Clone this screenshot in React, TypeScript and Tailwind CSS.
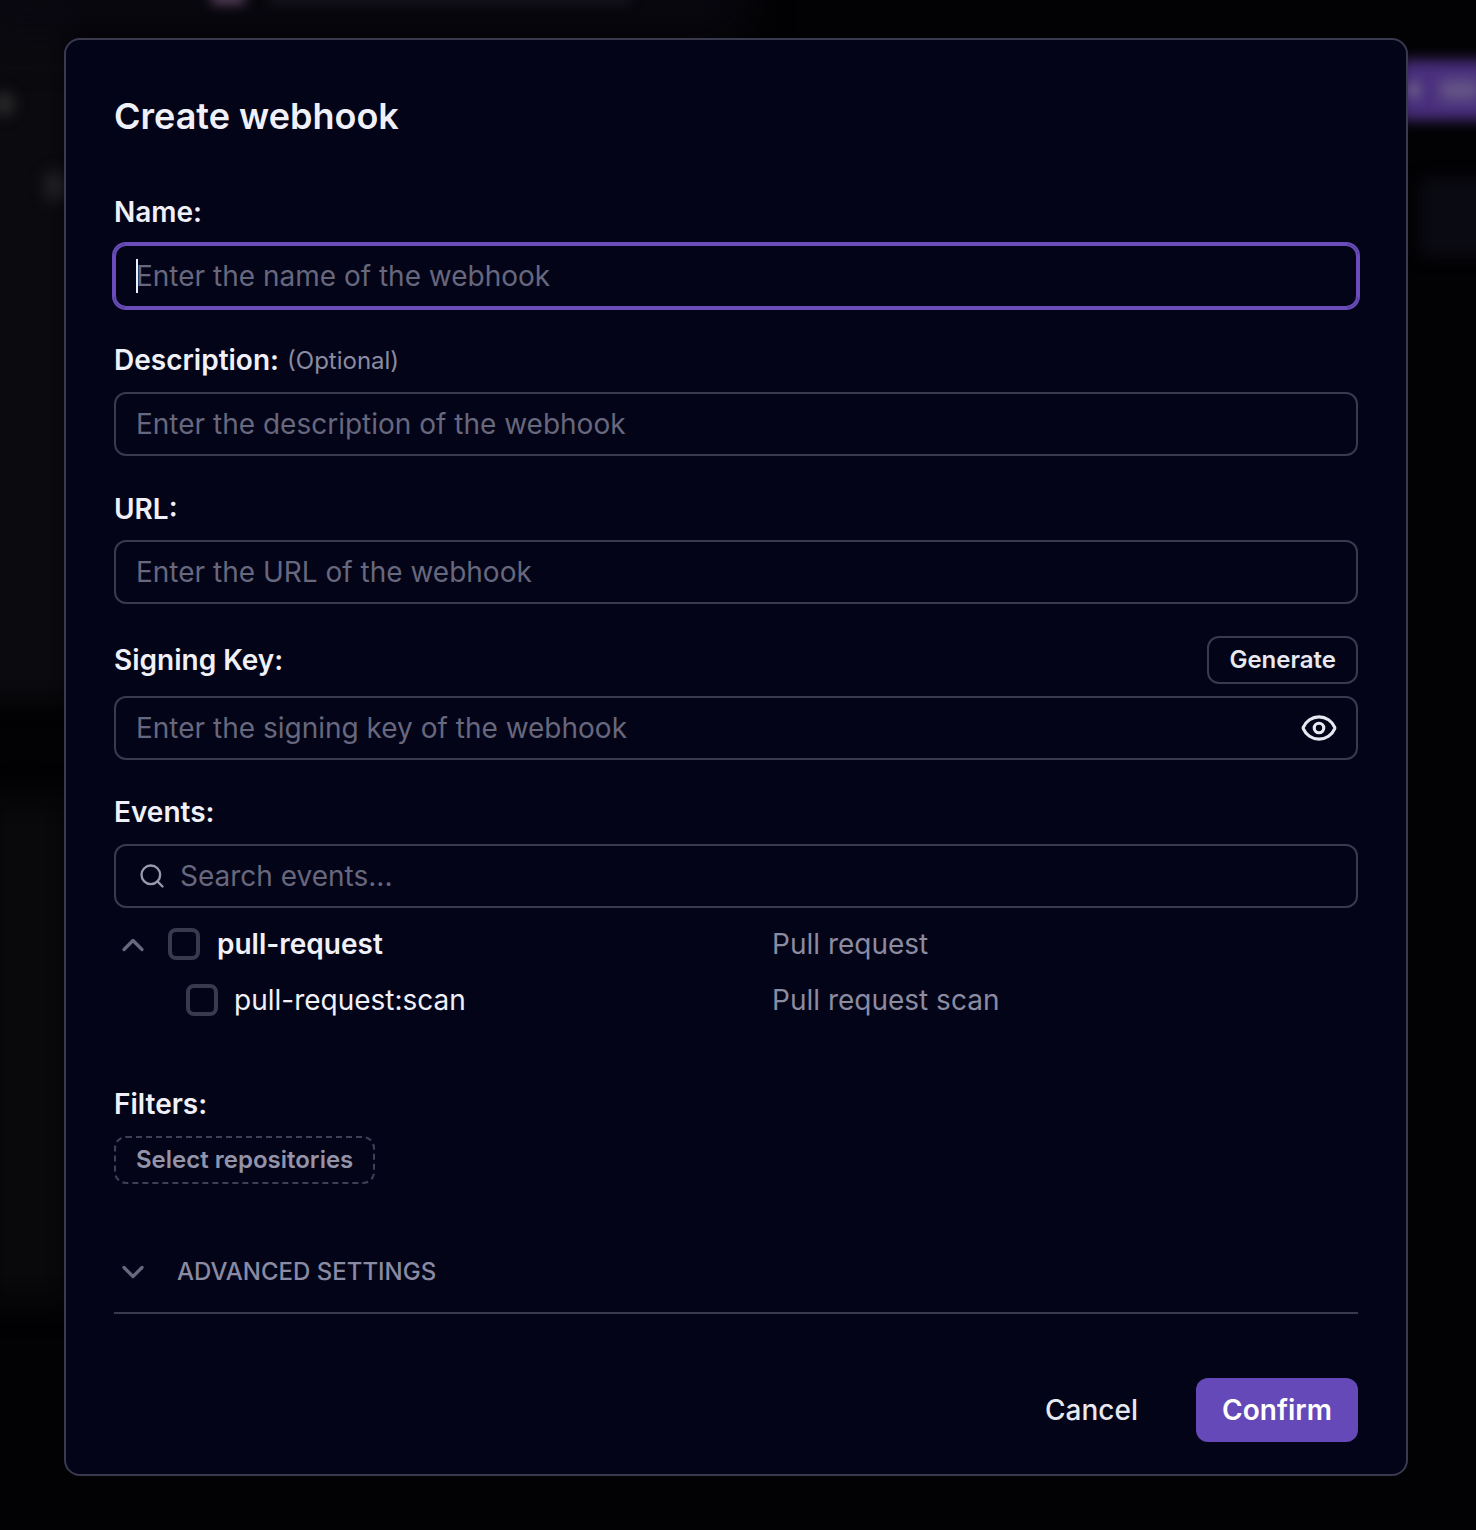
import { ChevronDown, ChevronUp, Eye, Search } from 'lucide-react';

const inputClass =
  'h-16 w-full rounded-xl border-2 border-[#3a3a4f] bg-transparent px-5 text-[28px] text-[#f0f0f8] outline-none placeholder:text-[#67677d]';

function Label({ children, className = '' }: { children: React.ReactNode; className?: string }) {
  return <label className={`block text-[28px] leading-8 font-semibold text-[#f0f0f8] ${className}`}>{children}</label>;
}

function Checkbox() {
  return <span className="block size-8 shrink-0 rounded-lg border-4 border-[#3a3a4f]" />;
}

function Backdrop() {
  return (
    <div className="pointer-events-none absolute inset-0 overflow-hidden" aria-hidden>
      <div className="absolute left-[-40px] top-[-40px] h-[740px] w-[110px] bg-[#0b0a0e] blur-md" />
      <div className="absolute left-[-20px] top-[-40px] h-[76px] w-[760px] bg-[#0a0810] blur-xl" />
      <div className="absolute left-[-20px] top-[800px] h-[500px] w-[90px] bg-[#09090b] blur-lg" />
      <div className="absolute left-[210px] top-[-8px] h-3 w-9 rounded-full bg-[#5a4560] blur-[6px]" />
      <div className="absolute left-[270px] top-[-6px] h-2 w-[360px] bg-[#1c1a22] blur-[6px]" />
      <div className="absolute left-[-6px] top-[92px] h-6 w-5 rounded-full bg-[#2a2a2c] blur-[7px]" />
      <div className="absolute left-[44px] top-[170px] h-8 w-5 rounded-full bg-[#201f23] blur-[7px]" />
      <div className="absolute left-[1400px] top-[60px] h-[60px] w-[90px] bg-[#4a2f7e] blur-[7px]" />
      <div className="absolute left-[1408px] top-[82px] h-4 w-3 bg-[#6e6088] blur-[6px]" />
      <div className="absolute left-[1440px] top-[80px] h-5 w-10 bg-[#655685] blur-[7px]" />
      <div className="absolute left-[1420px] top-[178px] h-[78px] w-[70px] bg-[#0a0a12] blur-[8px]" />
    </div>
  );
}

export default function App() {
  return (
    <div className="relative h-[1530px] w-[1476px] overflow-hidden bg-[#020204] pl-16 pt-[38px] font-['Inter',sans-serif]">
      <Backdrop />
      <div className="relative h-[1438px] w-[1344px] rounded-2xl border-2 border-[#3a3a4f] bg-[#030418] px-12 pt-[56px]">
        <h2 className="text-[36px] leading-10 font-semibold text-[#f0f0f8]">Create webhook</h2>

        <Label className="mt-[60px]">Name:</Label>
        <div className="relative mt-4">
          <input
            className="h-16 w-full rounded-xl border-2 border-[#6a4cba] bg-transparent px-5 text-[28px] text-[#f0f0f8] shadow-[0_0_0_2px_#6a4cba] outline-none placeholder:text-[#67677d]"
            placeholder="Enter the name of the webhook"
          />
          <span className="absolute left-[22px] top-[15px] h-[34px] w-0.5 bg-[#f0f0f8]" />
        </div>

        <Label className="mt-9">
          Description: <span className="ml-px align-[1px] text-[24px] font-normal text-[#8b8ba1]">(Optional)</span>
        </Label>
        <input className={`${inputClass} mt-[15px]`} placeholder="Enter the description of the webhook" />

        <Label className="mt-[37px]">URL:</Label>
        <input className={`${inputClass} mt-[15px]`} placeholder="Enter the URL of the webhook" />

        <div className="mt-8 flex items-center justify-between">
          <Label>Signing Key:</Label>
          <button className="h-12 rounded-xl border-2 border-[#3a3a4f] px-5 text-[24px] font-semibold text-[#e8e8f0]">
            Generate
          </button>
        </div>
        <div className="relative mt-3">
          <input className={inputClass} placeholder="Enter the signing key of the webhook" />
          <Eye size={38} strokeWidth={2} className="absolute right-5 top-[13px] text-[#e8e8f0]" />
        </div>

        <Label className="mt-9">Events:</Label>
        <div className="mt-4 flex h-16 items-center gap-[14px] rounded-xl border-2 border-[#3a3a4f] px-[22px]">
          <Search size={28} strokeWidth={2} className="shrink-0 text-[#9a9aae]" />
          <input
            className="w-full bg-transparent text-[28px] text-[#f0f0f8] outline-none placeholder:text-[#67677d]"
            placeholder="Search events..."
          />
        </div>

        <div className="mt-5 flex h-8 items-center">
          <div className="flex w-[658px] items-center">
            <span className="flex w-[38px] shrink-0 translate-y-px justify-center">
              <ChevronUp size={36} strokeWidth={2.2} className="shrink-0 text-[#67677d]" />
            </span>
            <span className="ml-4">
              <Checkbox />
            </span>
            <span className="ml-[17px] text-[28px] font-semibold text-[#f0f0f8]">pull-request</span>
          </div>
          <span className="text-[28px] text-[#8b8ba1]">Pull request</span>
        </div>
        <div className="mt-6 flex h-8 items-center">
          <div className="flex w-[658px] items-center pl-[72px]">
            <Checkbox />
            <span className="ml-4 text-[28px] text-[#f0f0f8]">pull-request:scan</span>
          </div>
          <span className="text-[28px] text-[#8b8ba1]">Pull request scan</span>
        </div>

        <Label className="mt-[72px]">Filters:</Label>
        <button className="mt-4 h-12 rounded-xl border-2 border-dashed border-[#3f3f55] px-5 text-[24px] font-semibold text-[#9393aa]">
          Select repositories
        </button>

        <div className="mt-[72px] flex h-8 items-center">
          <span className="flex w-[38px] shrink-0 justify-center">
            <ChevronDown size={36} strokeWidth={2.2} className="shrink-0 text-[#67677d]" />
          </span>
          <span className="ml-[25px] text-[24px] font-medium text-[#8a8aa3]">ADVANCED SETTINGS</span>
        </div>
        <div className="mt-6 h-0.5 bg-[#3a3a4f]" />

        <div className="mt-16 flex items-center justify-end">
          <button className="text-[28px] font-medium text-[#e8e8f0]">Cancel</button>
          <button className="ml-[58px] h-16 w-[162px] rounded-xl bg-[#6549b8] text-[28px] font-semibold text-white">
            Confirm
          </button>
        </div>
      </div>
    </div>
  );
}
